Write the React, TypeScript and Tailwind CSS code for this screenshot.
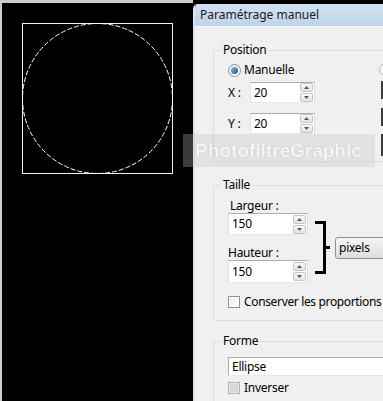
import React from "react";

const Spinner = () => (
  <div className="flex flex-col gap-px mr-px">
    <div className="w-[13px] h-[9px] border border-[#c3c6cb] rounded-[2px] bg-gradient-to-b from-[#f8f8f8] to-[#e3e3e3] flex items-center justify-center">
      <svg width="5" height="3" viewBox="0 0 5 3">
        <polygon points="0,3 2.5,0 5,3" fill="#4d5866" />
      </svg>
    </div>
    <div className="w-[13px] h-[9px] border border-[#c3c6cb] rounded-[2px] bg-gradient-to-b from-[#f8f8f8] to-[#e3e3e3] flex items-center justify-center">
      <svg width="5" height="3" viewBox="0 0 5 3">
        <polygon points="0,0 2.5,3 5,0" fill="#4d5866" />
      </svg>
    </div>
  </div>
);

function NumberBox({ value, width, height }: { value: string; width: string; height: string }) {
  return (
    <div
      className={`${width} ${height} bg-white border border-[#abadb3] border-b-[#e3e9ef] border-r-[#dbdfe6] border-l-[#e2e3ea] flex items-center justify-between`}
    >
      <span className="pl-[3px] text-[12px] leading-none">{value}</span>
      <Spinner />
    </div>
  );
}

const Checkbox = ({ disabled }: { disabled?: boolean }) => (
  <div
    className={`w-[12px] h-[12px] shrink-0 border ${
      disabled ? "border-[#b1b1b1] bg-[#e6e6e6]" : "border-[#8e8f8f] bg-white"
    }`}
  >
    <div className={`m-px w-[8px] h-[8px] ${disabled ? "bg-[#dadada]" : "bg-gradient-to-br from-[#eaeaea] to-white"}`} />
  </div>
);

export default function App() {
  return (
    <div
      className="relative w-[383px] h-[401px] flex bg-black overflow-hidden text-black tracking-[-0.25px]"
      style={{ fontFamily: '"Noto Sans", "Open Sans", sans-serif' }}
    >
      {/* canvas */}
      <div className="w-[193px] h-full bg-[#cccccc] pt-[3px] pl-[2px] shrink-0">
        <div className="h-full bg-black p-[20px]">
          <svg width="151" height="151" viewBox="0 0 151 151">
            <rect x="0.5" y="0.5" width="150" height="150" fill="none" stroke="#f2f2f2" strokeWidth="1" />
            <ellipse
              cx="75.5"
              cy="75.5"
              rx="75"
              ry="75"
              fill="none"
              stroke="#ffffff"
              strokeWidth="1"
              strokeDasharray="5 2"
            />
          </svg>
        </div>
      </div>

      {/* dialog */}
      <div className="flex-1 min-w-0 pt-[4px] overflow-hidden">
        <div className="h-full flex flex-col border-l-2 border-[#dfe3ea] rounded-tl-[5px] overflow-hidden">
          <div className="h-[22px] shrink-0 bg-gradient-to-b from-[#d3e2f2] to-[#bed3ea] pl-[5px] flex items-center">
            <span className="text-[12px] text-[#1b1b1b] tracking-normal">Paramétrage manuel</span>
          </div>
          <div className="flex-1 bg-[#f0f0f0] border-t border-[#fafafa] pl-[18px] pt-[15px]">
            {/* Position */}
            <fieldset className="w-[300px] h-[120px] border border-[#d5dfe5] rounded-[3px]">
              <legend className="ml-[7px] px-[2px] text-[12px] leading-[16px]">Position</legend>
              <div className="flex pl-[14px]">
                <div className="w-[151px] shrink-0">
                  <div className="mt-[4px] h-[16px] flex items-center">
                    <div className="w-[13px] h-[13px] rounded-full border border-[#8e8f8f] bg-gradient-to-br from-[#e8e8e8] to-white flex items-center justify-center">
                      <div className="w-[7px] h-[7px] rounded-full bg-gradient-to-br from-[#8cc3ec] to-[#1a4f80]" />
                    </div>
                    <span className="ml-[3px] text-[12px] leading-none">Manuelle</span>
                  </div>
                  <div className="mt-[4px] flex items-center">
                    <span className="w-[22px] text-[12px] leading-none">X :</span>
                    <NumberBox value="20" width="w-[65px]" height="h-[21px]" />
                  </div>
                  <div className="mt-[10px] flex items-center">
                    <span className="w-[22px] text-[12px] leading-none">Y :</span>
                    <NumberBox value="20" width="w-[65px]" height="h-[21px]" />
                  </div>
                </div>
                <div className="flex flex-col">
                  <div className="mt-[5px] w-[13px] h-[13px] rounded-full border border-[#b9b9b9] bg-[#f4f4f4]" />
                  <div className="ml-[2px] mt-[5px] w-[40px] h-[18px] border-2 border-[#3a3a3a] bg-white" />
                  <div className="ml-[2px] mt-[9px] w-[40px] h-[18px] border-2 border-[#3a3a3a] bg-white" />
                  <div className="ml-[2px] mt-[8px] w-[40px] h-[22px] border-2 border-[#3a3a3a] bg-white" />
                </div>
              </div>
            </fieldset>

            {/* Taille */}
            <fieldset className="mt-[15px] w-[300px] h-[144px] border border-[#d5dfe5] rounded-[3px]">
              <legend className="ml-[7px] px-[2px] text-[12px] leading-[16px]">Taille</legend>
              <div className="flex pl-[14px]">
                <div className="w-[80px] shrink-0">
                  <div className="mt-[6px] pl-[2px] text-[12px] leading-[14px]">Largeur :</div>
                  <NumberBox value="150" width="w-[80px]" height="h-[22px]" />
                  <div className="mt-[11px] text-[12px] leading-[14px]">Hauteur :</div>
                  <NumberBox value="150" width="w-[80px]" height="h-[23px]" />
                </div>
                <svg className="ml-[7px] mt-[28px] shrink-0" width="16" height="53" viewBox="0 0 16 53">
                  <path d="M0 1.5 H9.5 V51.5 H0 M9.5 26.5 H15" fill="none" stroke="#000" strokeWidth="3" />
                </svg>
                <div className="ml-[4px] mt-[44px] w-[80px] h-[22px] shrink-0 rounded-[3px] border border-[#8e8f8f] bg-gradient-to-b from-[#f5f5f5] to-[#dedede] flex items-center pl-[3px]">
                  <span className="text-[12px] leading-none">pixels</span>
                </div>
              </div>
              <div className="mt-[11px] pl-[14px] h-[16px] flex items-center">
                <Checkbox />
                <span className="ml-[4px] text-[12px] leading-none whitespace-nowrap tracking-[-0.35px]">
                  Conserver les proportions
                </span>
              </div>
            </fieldset>

            {/* Forme */}
            <fieldset className="mt-[12px] w-[300px] h-[90px] border border-[#d5dfe5] rounded-[3px]">
              <legend className="ml-[7px] px-[2px] text-[12px] leading-[16px]">Forme</legend>
              <div className="pl-[14px]">
                <div className="mt-[8px] h-[19px] w-[200px] bg-white border border-[#abadb3] border-b-[#e3e9ef] flex items-center pl-[3px]">
                  <span className="text-[12px] leading-none">Ellipse</span>
                </div>
                <div className="mt-[4px] h-[16px] flex items-center">
                  <Checkbox disabled />
                  <span className="ml-[4px] text-[12px] leading-none">Inverser</span>
                </div>
              </div>
            </fieldset>
          </div>
        </div>
      </div>

      {/* watermark */}
      <div className="absolute left-[183px] top-[134px] w-[192px] h-[33px] bg-[#c2c2c2]/30 flex items-center pl-[12px]">
        <span
          className="text-[19px] font-bold text-white/90 leading-none tracking-normal"
          style={{ fontFamily: '"Liberation Sans", Arial, sans-serif', textShadow: "0 0 1px rgba(120,120,120,0.6)" }}
        >
          PhotofiltreGraphic
        </span>
      </div>
    </div>
  );
}
